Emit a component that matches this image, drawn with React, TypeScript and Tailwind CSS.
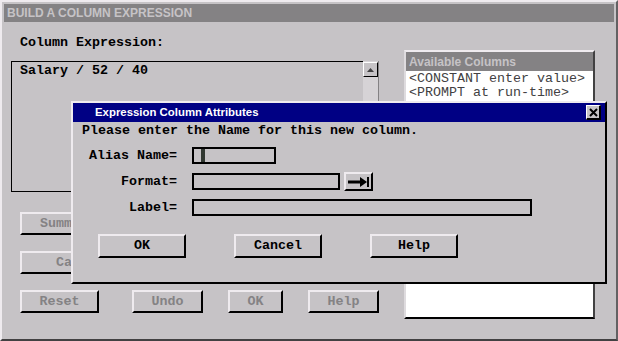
const mono = "font-['Liberation_Mono',monospace] text-[13.33px]";
const sans = "font-['Liberation_Sans',Arial,sans-serif]";

const bevel =
  "border-t-2 border-l-2 border-r-2 border-b-2 border-t-[#efebef] border-l-[#efebef] border-r-black border-b-black bg-[#c6c3c6]";

const Btn = ({
  label,
  w,
  disabled,
  className = "",
}: {
  label: string;
  w: string;
  disabled?: boolean;
  className?: string;
}) => (
  <div
    className={`${bevel} ${w} ${mono} flex items-center justify-center font-bold ${
      disabled ? "text-[#848284]" : "text-black"
    } ${className}`}
  >
    {label}
  </div>
);

const Field = ({ w, cursor }: { w: string; cursor?: boolean }) => (
  <div className={`${w} h-[17px] border-2 border-black bg-[#c6c3c6] pl-[7px]`}>
    {cursor && <div className="h-full w-[4px] bg-[#313831]" />}
  </div>
);

const Row = ({ label, children }: { label: string; children: React.ReactNode }) => (
  <div className="flex h-[17px] items-center">
    <span className={`${mono} w-[104px] text-right font-bold leading-[17px] text-black`}>{label}</span>
    <div className="ml-[15px] flex items-center">{children}</div>
  </div>
);

const Dialog = () => (
  <div className="absolute left-[69px] top-[99px] flex h-[183px] w-[536px] flex-col border-t-2 border-l-2 border-r-2 border-b-2 border-t-[#efebef] border-l-[#efebef] border-r-black border-b-black bg-[#c6c3c6]">
    <div className="flex h-[19px] items-center justify-between bg-[#000084] pl-[22px] pr-[4px]">
      <span className={`${sans} text-[11.4px] font-bold text-white`}>
        Expression Column Attributes
      </span>
      <div className="flex h-[15px] w-[15px] items-center justify-center border-t border-l border-r-2 border-b-2 border-t-white border-l-white border-r-black border-b-black bg-[#c6c3c6]">
        <svg width="9" height="9" viewBox="0 0 9 9">
          <path d="M1 1 L8 8 M8 1 L1 8" stroke="black" strokeWidth="2" />
        </svg>
      </div>
    </div>

    <div className={`${mono} mt-[1px] h-[16px] pl-[9px] font-bold leading-[16px] text-black`}>
      Please enter the Name for this new column.
    </div>

    <div className="mt-[8px] flex flex-col gap-[9px]">
      <Row label="Alias Name=">
        <Field w="w-[84px]" cursor />
      </Row>
      <Row label="Format=">
        <Field w="w-[148px]" />
        <div className={`${bevel} ml-[4px] flex h-[19px] w-[29px] items-center justify-center`}>
          <svg width="22" height="12" viewBox="0 0 22 12">
            <rect x="0" y="4.5" width="14" height="3" fill="black" />
            <polygon points="12,1 19,6 12,11" fill="black" />
            <rect x="19" y="1" width="2" height="10" fill="black" />
          </svg>
        </div>
      </Row>
      <Row label="Label=">
        <Field w="w-[340px]" />
      </Row>
    </div>

    <div className="mt-[18px] flex gap-[48px] pl-[25px]">
      <Btn label="OK" w="w-[88px] h-[24px]" />
      <Btn label="Cancel" w="w-[88px] h-[24px]" />
      <Btn label="Help" w="w-[88px] h-[24px]" />
    </div>
  </div>
);

export default function App() {
  return (
    <div className="relative h-[341px] w-[618px] border-t-2 border-l-2 border-r-2 border-b-2 border-t-[#efebef] border-l-[#efebef] border-r-[#636163] border-b-[#424142] bg-[#c6c3c6]">
      <div className="mx-[2px] mt-[2px] flex h-[18px] items-center bg-[#848284] pl-[3px]">
        <span className={`${sans} text-[12px] font-bold text-[#c6c3c6]`}>
          BUILD A COLUMN EXPRESSION
        </span>
      </div>

      <div className="flex">
        <div className="ml-[9px] flex w-[368px] flex-col">
          <div className={`${mono} mt-[13px] h-[16px] pl-[9px] font-bold leading-[16px] text-black`}>
            Column Expression:
          </div>
          <div className="mt-[10px] flex h-[131px]">
            <div className="w-[352px] border-t border-l border-b border-black">
              <div className={`${mono} pl-[8px] pt-[1px] font-bold leading-[16px] text-black`}>
                Salary / 52 / 40
              </div>
            </div>
            <div className="flex w-[16px] flex-col border-r border-[#848284] bg-[#d6d3d6] pt-[1px]">
              <div className="flex h-[15px] w-[15px] items-center justify-center border-t border-l border-r border-b border-t-white border-l-white border-r-black border-b-black bg-[#c6c3c6]">
                <svg width="7" height="4" viewBox="0 0 7 4">
                  <polygon points="0,4 3.5,0 7,4" fill="#424142" />
                </svg>
              </div>
            </div>
          </div>

          <Btn label="Summary" w="w-[190px] h-[23px]" disabled className="ml-[9px] mt-[20px] !justify-start pl-[18px]" />
          <Btn label="Calc" w="w-[190px] h-[23px]" disabled className="ml-[9px] mt-[16px] !justify-start pl-[34px]" />

          <div className="ml-[9px] mt-[16px] flex">
            <Btn label="Reset" w="w-[79px] h-[23px]" disabled />
            <Btn label="Undo" w="w-[71px] h-[23px]" disabled className="ml-[33px]" />
            <Btn label="OK" w="w-[55px] h-[23px]" disabled className="ml-[25px]" />
            <Btn label="Help" w="w-[71px] h-[23px]" disabled className="ml-[25px]" />
          </div>
        </div>

        <div className="ml-[25px] mt-[28px] flex h-[269px] w-[191px] flex-col border-t-2 border-l-2 border-r-2 border-b-2 border-t-[#efebef] border-l-[#dedbde] border-r-[#424142] border-b-black">
          <div className="flex h-[19px] items-center bg-[#848284] pl-[3px]">
            <span className={`${sans} text-[12px] font-bold text-[#c6c3c6]`}>Available Columns</span>
          </div>
          <div className={`${mono} flex-1 bg-white pl-[3px] pt-[1px] leading-[14px] text-[#424142]`}>
            <div>&lt;CONSTANT enter value&gt;</div>
            <div>&lt;PROMPT at run-time&gt;</div>
            <div>Identification Num</div>
          </div>
        </div>
      </div>

      <Dialog />
    </div>
  );
}
